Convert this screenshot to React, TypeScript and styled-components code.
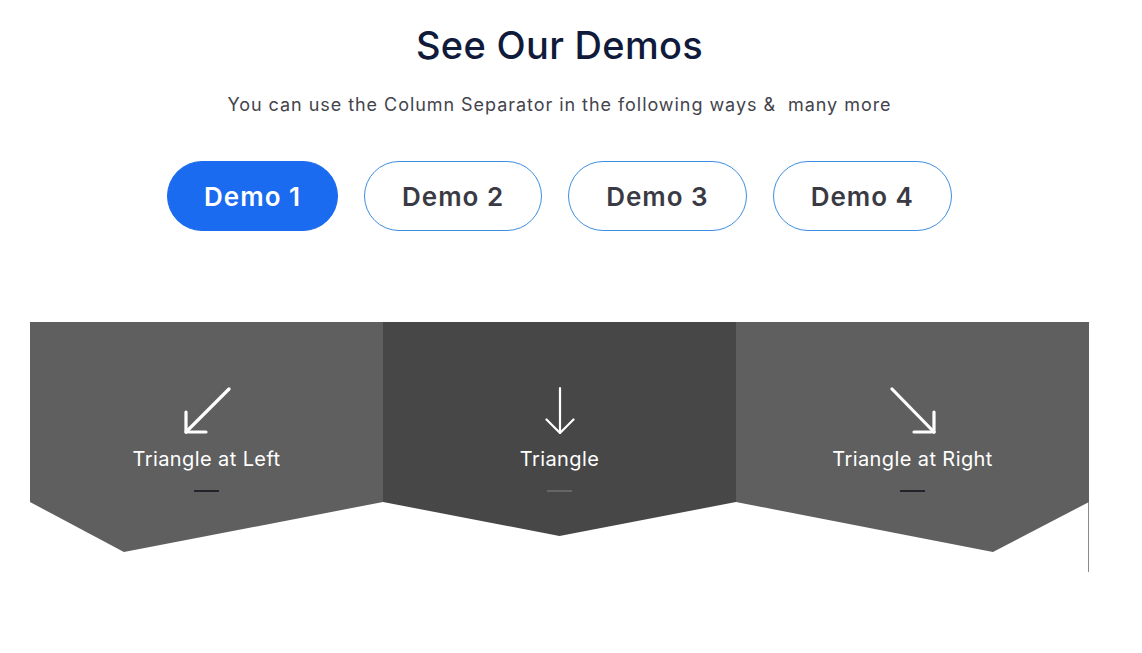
import styled, { createGlobalStyle } from 'styled-components';

const GlobalStyle = createGlobalStyle`
  body {
    margin: 0;
    background: #fff;
    font-family: "Inter", "Open Sans", sans-serif;
  }
`;

type Shape = 'left' | 'center' | 'right';

interface demoItem {
  title: string,
  shape: Shape,
}

const demos = ['Demo 1', 'Demo 2', 'Demo 3', 'Demo 4'];

const columns: demoItem[] = [
  { title: 'Triangle at Left', shape: 'left' },
  { title: 'Triangle', shape: 'center' },
  { title: 'Triangle at Right', shape: 'right' },
];

const clips: Record<Shape, string> = {
  left: 'polygon(0 0, 100% 0, 100% 180px, 26.6% 100%, 0 180px)',
  center: 'polygon(0 0, 100% 0, 100% 180px, 50% 214px, 0 180px)',
  right: 'polygon(0 0, 100% 0, 100% 180px, 72.8% 100%, 0 180px)',
};

const Arrow = ({ shape }: { shape: Shape }) => {
  if (shape === 'center') {
    return (
      <svg width="48" height="48" viewBox="0 0 48 48" fill="none" stroke="#fff" strokeWidth="2.2" strokeLinecap="round" strokeLinejoin="round">
        <path d="M24 2v45" />
        <path d="M10.5 33.5L24 47l13.5-13.5" />
      </svg>
    );
  }
  if (shape === 'left') {
    return (
      <svg width="48" height="48" viewBox="0 0 48 48" fill="none" stroke="#fff" strokeWidth="3.2" strokeLinecap="round" strokeLinejoin="round">
        <path d="M46 3L3 46" />
        <path d="M3 26v20h20" />
      </svg>
    );
  }
  return (
    <svg width="48" height="48" viewBox="0 0 48 48" fill="none" stroke="#fff" strokeWidth="3.2" strokeLinecap="round" strokeLinejoin="round">
      <path d="M3 3l42 43" />
      <path d="M45 26v20H25" />
    </svg>
  );
};

const App = () => {
  return (
    <>
      <GlobalStyle />
      <Page>
        <Title>See Our Demos</Title>
        <Subtitle>You can use the Column Separator in the following ways &amp;&nbsp; many more</Subtitle>
        <ButtonRow>
          {demos.map((d, i) => (
            <DemoButton key={d} $active={i === 0}>{d}</DemoButton>
          ))}
        </ButtonRow>
        <Columns>
          {columns.map((c) => (
            <Column key={c.title} $shape={c.shape}>
              <Arrow shape={c.shape} />
              <ColumnTitle>{c.title}</ColumnTitle>
              <Divider $muted={c.shape === 'center'} />
            </Column>
          ))}
        </Columns>
      </Page>
    </>
  );
}

const Page = styled.div`
  padding: 23px 53px 0 30px;
  display: flex;
  flex-direction: column;
  align-items: center;
`;

const Title = styled.h2`
  margin: 0;
  font-size: 38px;
  line-height: 44px;
  font-weight: 500;
  color: #101b3b;
  letter-spacing: 0.3px;
`;

const Subtitle = styled.p`
  margin: 26px 0 0;
  font-size: 18px;
  line-height: 24px;
  color: #44444c;
  letter-spacing: 0.95px;
`;

const ButtonRow = styled.div`
  margin-top: 44px;
  display: flex;
  gap: 26px;
`;

const DemoButton = styled.button<{ $active?: boolean }>`
  height: 70px;
  padding: 0 ${(p) => (p.$active ? '36px' : '37px')};
  border-radius: 35px;
  border: 1px solid ${(p) => (p.$active ? '#1a6bef' : '#3d8ee0')};
  background: ${(p) => (p.$active ? '#1a6bef' : '#fff')};
  color: ${(p) => (p.$active ? '#fff' : '#3a3a44')};
  font-family: inherit;
  font-size: 26px;
  letter-spacing: 1px;
  font-weight: 600;
  cursor: pointer;
`;

const Columns = styled.div`
  position: relative;
  margin-top: 91px;
  align-self: stretch;
  display: grid;
  grid-template-columns: repeat(3, 1fr);
  height: 250px;

  &::after {
    content: "";
    position: absolute;
    right: 0;
    top: 180px;
    width: 1px;
    height: 70px;
    background: #8a8a8a;
  }
`;

const Column = styled.div<{ $shape: Shape }>`
  height: 230px;
  background: ${(p) => (p.$shape === 'center' ? '#474747' : '#5f5f5f')};
  clip-path: ${(p) => clips[p.$shape]};
  display: flex;
  flex-direction: column;
  align-items: center;
  padding-top: 64px;
  box-sizing: border-box;
`;

const ColumnTitle = styled.div`
  margin-top: 13px;
  font-size: 20px;
  line-height: 24px;
  letter-spacing: 0.4px;
  color: #fff;
`;

const Divider = styled.span<{ $muted?: boolean }>`
  margin-top: 19px;
  width: 25px;
  height: 2px;
  background: ${(p) => (p.$muted ? '#666' : '#23232c')};
`;

export default App;
